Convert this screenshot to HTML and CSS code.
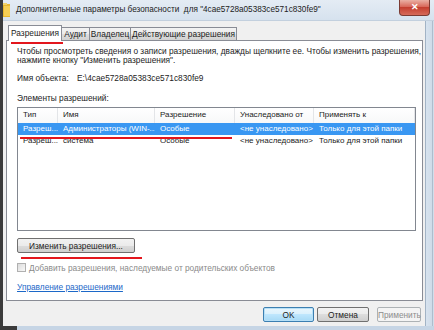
FILE: index.html
```html
<!DOCTYPE html>
<html lang="ru">

<head>
    <meta charset="UTF-8">
    <title>Дополнительные параметры безопасности</title>
    <link rel="stylesheet" href="styles.css">
</head>

<body>
    <div class="window">
        <div class="titlebar">
            <svg class="folder" width="7" height="14" viewBox="0 0 7 14">
                <rect x="0" y="1" width="7" height="13" fill="#e8b830" />
                <rect x="0" y="0" width="4" height="2" fill="#f3d36a" />
                <rect x="1" y="3" width="6" height="10" fill="#f6cf55" />
            </svg>
            <span class="title">Дополнительные параметры безопасности&nbsp; для "4cae5728a05383ce571c830fe9"</span>
            <div class="close">&#x2715;</div>
        </div>

        <div class="frame">
            <div class="client">
                <ul class="tabs">
                    <li class="tab active">Разрешения</li>
                    <li class="tab tab-audit">Аудит</li>
                    <li class="tab tab-owner">Владелец</li>
                    <li class="tab tab-eff">Действующие разрешения</li>
                </ul>

                <div class="panel">
                    <p class="intro">Чтобы просмотреть сведения о записи разрешения, дважды щелкните ее. Чтобы изменить разрешения,<br>нажмите кнопку "Изменить разрешения".</p>

                    <div class="object">
                        <span class="label">Имя объекта:</span>
                        <span>E:\4cae5728a05383ce571c830fe9</span>
                    </div>

                    <div class="caption">Элементы разрешений:</div>

                    <div class="list">
                        <div class="row head">
                            <span>Тип</span>
                            <span>Имя</span>
                            <span>Разрешение</span>
                            <span>Унаследовано от</span>
                            <span>Применять к</span>
                        </div>
                        <div class="row selected">
                            <span>Разреш...</span>
                            <span>Администраторы (WIN-...</span>
                            <span>Особые</span>
                            <span>&lt;не унаследовано&gt;</span>
                            <span>Только для этой папки</span>
                        </div>
                        <div class="row">
                            <span>Разреш...</span>
                            <span>система</span>
                            <span>Особые</span>
                            <span>&lt;не унаследовано&gt;</span>
                            <span>Только для этой папки</span>
                        </div>
                    </div>

                    <button class="btn btn-change">Изменить разрешения...</button>

                    <label class="check"><span class="box"></span>Добавить разрешения, наследуемые от родительских объектов</label>

                    <a class="link" href="#">Управление разрешениями</a>
                </div>

                <div class="footer">
                    <button class="btn btn-ok">OK</button>
                    <button class="btn btn-cancel">Отмена</button>
                    <button class="btn btn-apply">Применить</button>
                </div>
            </div>
            <div class="rborder"></div>
        </div>
        <div class="bottom"></div>

        <!-- красные пометки -->
        <div class="mark mark-tab"></div>
        <div class="mark mark-row"></div>
        <div class="mark mark-btn"></div>
    </div>
</body>

</html>
```

FILE: styles.css
```css
* {
    margin: 0;
    padding: 0;
    box-sizing: border-box;
}

body {
    width: 434px;
    height: 330px;
    overflow: hidden;
    background: #2e2e2e;
    font-family: "Liberation Sans", Arial, sans-serif;
    font-size: 8.3px;
    color: #1c1c1c;
}

li {
    list-style: none;
}

.window {
    position: relative;
    width: 434px;
    height: 330px;
    display: flex;
    flex-direction: column;
    border-left: 3px solid #3b3b3b;
    background: #d4e0ec;
}

/* заголовок окна */
.titlebar {
    height: 21px;
    display: flex;
    align-items: flex-start;
    background: linear-gradient(#e4ecf4, #d6e2ee);
    border-bottom: 1px solid #c3d0de;
}

.folder {
    margin-top: 3px;
}

.title {
    margin-left: 6px;
    line-height: 20px;
    font-size: 8.2px;
    color: #222;
    white-space: nowrap;
}

.close {
    margin-left: auto;
    margin-right: 4px;
    width: 31px;
    height: 16px;
    border: 1px solid #7b3b33;
    border-top: none;
    border-radius: 0 0 4px 4px;
    background: linear-gradient(#eab0a4, #d8685a 45%, #c43f30 50%, #d66b5a);
    color: #fff;
    font-size: 9px;
    font-weight: bold;
    line-height: 15px;
    text-align: center;
}

.frame {
    flex: 1;
    display: flex;
}

.client {
    flex: 1;
    background: #f0f0f0;
    padding: 4px 2px 0 3px;
}

.rborder {
    width: 9px;
    background: linear-gradient(90deg, #a2b3c5 1px, #d7e3ef 1px, #cfdbe8 7px, #aebdcd 7px, #aebdcd 8px, #d2deea 8px);
}

.bottom {
    height: 4px;
    background: linear-gradient(90deg, #3b3b3b 14px, #c6d5e5 14px);
}

/* вкладки */
.tabs {
    height: 15px;
    display: flex;
    align-items: flex-end;
    padding-left: 2px;
}

.tab {
    height: 13px;
    line-height: 12px;
    text-align: center;
    border: 1px solid #898c95;
    border-bottom: none;
    margin-left: -1px;
    background: linear-gradient(#f3f3f3, #ebebeb 50%, #dedede 50%, #d2d2d2);
    white-space: nowrap;
}

.tab.active {
    position: relative;
    z-index: 1;
    width: 54px;
    height: 16px;
    line-height: 15px;
    margin-left: 0;
    margin-bottom: -1px;
    background: #fff;
}

.tab-audit {
    width: 29px;
}

.tab-owner {
    width: 42px;
}

.tab-eff {
    width: 107px;
}

/* содержимое вкладки */
.panel {
    height: 261px;
    border: 1px solid #898c95;
    background: #fff;
    padding: 6px 0 0 10px;
}

.intro {
    line-height: 9px;
    white-space: nowrap;
}

.object {
    display: flex;
    margin-top: 9px;
    line-height: 8px;
}

.object .label {
    width: 60px;
}

.caption {
    margin-top: 12px;
    line-height: 8px;
}

.list {
    margin-top: 5px;
    width: 399px;
    height: 124px;
    border: 1px solid #828790;
}

.row {
    display: grid;
    grid-template-columns: 40px 97px 80px 79px 1fr;
    height: 12px;
    line-height: 12px;
    font-size: 8px;
    white-space: nowrap;
}

.row span {
    padding-left: 5px;
    overflow: hidden;
}

.row.head {
    height: 15px;
    line-height: 14px;
    background: linear-gradient(#fff, #f7f8f9);
}

.row.head span {
    border-right: 1px solid #e3e5e8;
}

.row.selected {
    background: #3997f2;
    color: #fff;
}

/* кнопки */
.btn {
    height: 15px;
    padding: 0;
    font-family: inherit;
    font-size: 8.3px;
    color: #1c1c1c;
    border: 1px solid #707070;
    border-radius: 2px;
    background: linear-gradient(#f2f2f2, #ebebeb 50%, #dddddd 50%, #cfcfcf);
}

.btn-change {
    display: block;
    width: 118px;
    margin-top: 7px;
}

.check {
    display: flex;
    align-items: center;
    margin-top: 10px;
    height: 9px;
    color: #8a8a8a;
    white-space: nowrap;
}

.check .box {
    width: 9px;
    height: 9px;
    margin-right: 3px;
    border: 1px solid #b0b0b0;
    background: linear-gradient(135deg, #dcdcdc, #f8f8f8);
}

.link {
    display: block;
    margin-top: 11px;
    line-height: 8px;
    color: #1c68c8;
    text-decoration: underline;
}

.footer {
    display: flex;
    justify-content: flex-end;
    padding-top: 6px;
    padding-right: 2px;
}

.btn-ok {
    width: 51px;
    border-color: #3c7fb1;
    box-shadow: inset 0 0 0 1px #b7e0f7;
    background: linear-gradient(#eaf6fd, #d9f0fc 50%, #bee6fd 50%, #a7d9f5);
}

.btn-cancel {
    width: 52px;
    margin-left: 3px;
}

.btn-apply {
    width: 44px;
    margin-left: 8px;
    color: #8d8d8d;
    border-color: #adb2b5;
    background: #f4f4f4;
}

/* красные пометки */
.mark {
    position: absolute;
    height: 2px;
    background: #e3161d;
}

.mark-tab {
    left: 8px;
    top: 42px;
    width: 52px;
}

.mark-row {
    left: 17px;
    top: 137px;
    width: 212px;
}

.mark-btn {
    left: 18px;
    top: 257px;
    width: 121px;
}
```
